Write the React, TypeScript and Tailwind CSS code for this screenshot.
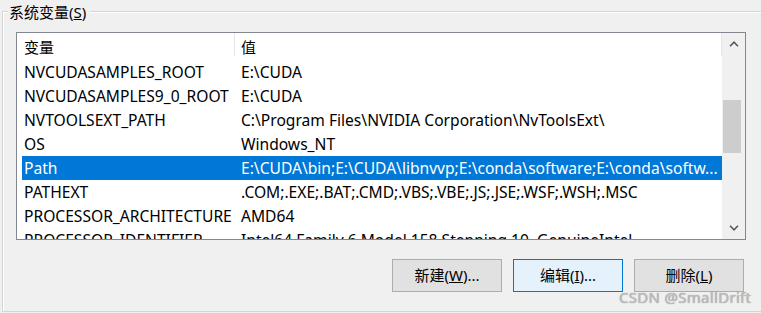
import React from "react";

type Row = { name: string; value: string; selected?: boolean };

const rows: Row[] = [
  { name: "NVCUDASAMPLES_ROOT", value: "E:\\CUDA" },
  { name: "NVCUDASAMPLES9_0_ROOT", value: "E:\\CUDA" },
  { name: "NVTOOLSEXT_PATH", value: "C:\\Program Files\\NVIDIA Corporation\\NvToolsExt\\" },
  { name: "OS", value: "Windows_NT" },
  {
    name: "Path",
    value: "E:\\CUDA\\bin;E:\\CUDA\\libnvvp;E:\\conda\\software;E:\\conda\\softw...",
    selected: true,
  },
  { name: "PATHEXT", value: ".COM;.EXE;.BAT;.CMD;.VBS;.VBE;.JS;.JSE;.WSF;.WSH;.MSC" },
  { name: "PROCESSOR_ARCHITECTURE", value: "AMD64" },
  { name: "PROCESSOR_IDENTIFIER", value: "Intel64 Family 6 Model 158 Stepping 10, GenuineIntel" },
];

function Chevron({ up }: { up?: boolean }) {
  return (
    <svg width="10" height="6" viewBox="0 0 10 6" className="block">
      <path
        d={up ? "M1 5.2 L5 1.2 L9 5.2" : "M1 0.8 L5 4.8 L9 0.8"}
        fill="none"
        stroke="#5a5a5a"
        strokeWidth="1.6"
      />
    </svg>
  );
}

export default function App() {
  return (
    <div className="relative w-[761px] h-[313px] overflow-hidden bg-[#f0f0f0] text-[15px] text-black font-['Noto_Sans','Noto_Sans_CJK_SC',sans-serif]">
      <div className="relative ml-[2px] mt-[11px] h-[301px] w-[800px] border-l border-t border-b border-[#d5d5d5] shadow-[inset_1px_1px_0_#ffffff] pl-[13px] pt-[20px]">
        <span className="absolute left-[5px] top-[-11px] bg-[#f0f0f0] pl-[1px] pr-[4px] leading-[22px] whitespace-nowrap">
          系统变量(<u>S</u>)
        </span>

        <div className="flex w-[730px] h-[208px] border border-[#828790] bg-white">
          <div className="w-[705px] overflow-hidden text-[15.6px]">
            <div className="flex h-[27px] text-[15px]">
              <div className="flex h-[23px] w-[218px] items-center border-r border-[#e5e5e5] pl-[7px] pt-[5px]">
                变量
              </div>
              <div className="flex h-[23px] flex-1 items-center border-r border-[#e5e5e5] pl-[6px] pt-[5px]">
                值
              </div>
            </div>
            {rows.map((r) => (
              <div
                key={r.name}
                className={
                  "ml-[5px] flex h-[24px] w-[700px] items-center whitespace-nowrap pt-[2px] " +
                  (r.selected ? "bg-[#0078d7] text-white" : "")
                }
              >
                <div className="w-[213px] shrink-0 overflow-hidden pl-[2px]">{r.name}</div>
                <div className="flex-1 overflow-hidden pl-[6px]">{r.value}</div>
              </div>
            ))}
          </div>

          <div className="flex w-[23px] flex-col bg-[#f0f0f0]">
            <div className="flex h-[22px] items-center justify-center">
              <Chevron up />
            </div>
            <div className="flex-1">
              <div className="ml-[1px] mt-[45px] h-[53px] w-[18px] bg-[#cdcdcd]" />
            </div>
            <div className="flex h-[22px] items-center justify-center">
              <Chevron />
            </div>
          </div>
        </div>

        <div className="mt-[19px] flex w-[728px] justify-end gap-[11px]">
          <button className="flex h-[33px] w-[110px] items-center justify-center border border-[#adadad] bg-[#e1e1e1]">
            新建(<u>W</u>)...
          </button>
          <button className="flex h-[33px] w-[110px] items-center justify-center border border-[#0078d7] bg-[#e5f1fb]">
            编辑(<u>I</u>)...
          </button>
          <button className="flex h-[33px] w-[110px] items-center justify-center border border-[#adadad] bg-[#e1e1e1]">
            删除(<u>L</u>)
          </button>
        </div>
      </div>

      <span className="absolute left-[619px] top-[286px] text-[15px] tracking-[0.3px] text-[#bdbdbd] [text-shadow:0_0_1px_#8a8a8a] whitespace-nowrap">
        CSDN @SmallDrift
      </span>
    </div>
  );
}
